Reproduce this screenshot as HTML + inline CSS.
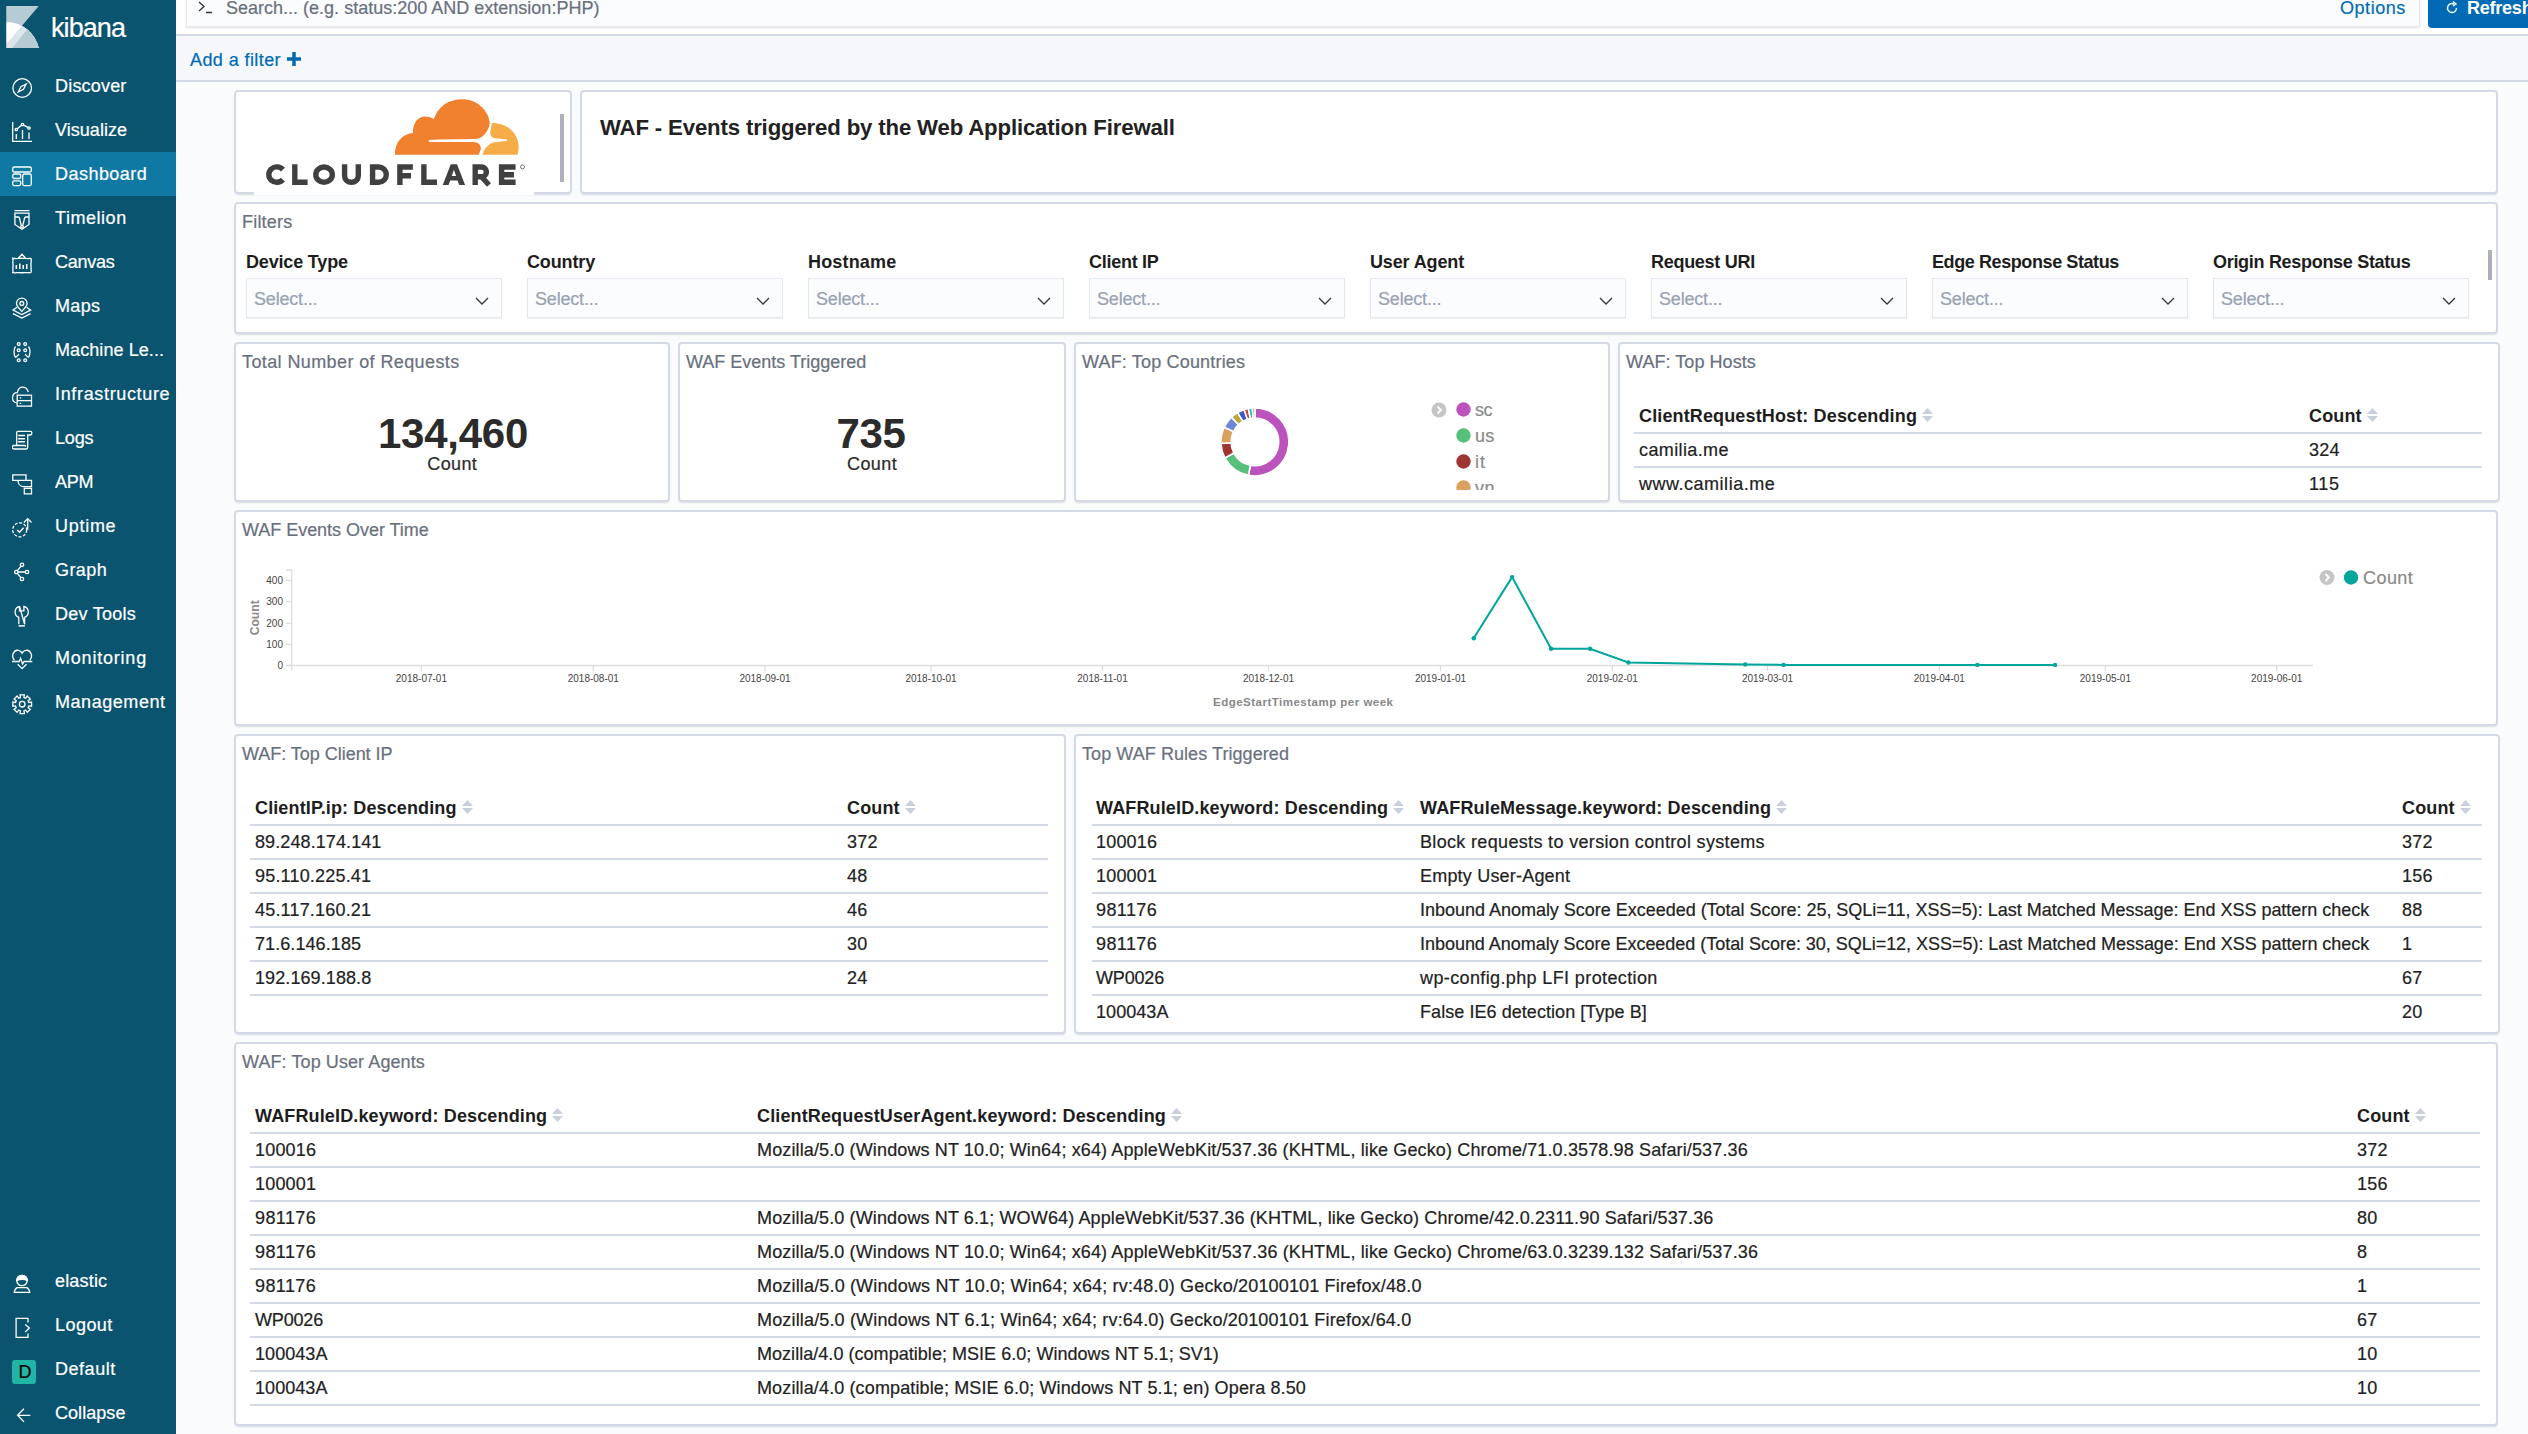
<!DOCTYPE html><html><head><meta charset="utf-8"><style>
*{box-sizing:border-box;margin:0;padding:0}
html,body{width:2528px;height:1434px;overflow:hidden}
body{position:relative;background:#fafbfd;font-family:"Liberation Sans",sans-serif;color:#2d2d2d}
.a{position:absolute;white-space:nowrap}
.nav svg{position:absolute;fill:none;stroke:#fff;stroke-width:1.3}
.p{position:absolute;background:#fff;border:2px solid #d3dae6;border-radius:4px;box-shadow:0 2px 2px -1px rgba(152,162,179,.35);overflow:hidden}
.hl{position:absolute;height:2px;background:#d3dae6}
</style></head><body>
<div class="a" style="left:0;top:0;width:176px;height:1434px;background:#0a5470"></div>
<svg class="a" style="left:6px;top:6px" width="33" height="42" viewBox="0 0 32.4 41.8"><defs><clipPath id="kc"><path d="M0 15.9A33.2 33.2 0 0 1 32.4 41.8H0Z"/></clipPath></defs><path d="M0 0H32.4L0 38.1Z" fill="#b5ccd4"/><g clip-path="url(#kc)"><rect x="0" y="0" width="33" height="42" fill="#fff"/><path d="M32.4 0H50V41.8H0V38.1Z" fill="#dce5e9"/><path d="M39.6 0H50V41.8H5.9Z" fill="#b5ccd4"/></g></svg>
<div class="a" style="left:51.00px;top:13.14px;font-size:27.00px;line-height:31px;color:#fff;-webkit-text-stroke:0.2px #fff;letter-spacing:-0.926px;">kibana</div>
<svg class="a" style="left:12px;top:76px;stroke:#fff;fill:none;stroke-width:1.3" width="22" height="26" viewBox="0 0 22 26"><g transform="translate(0 2)"><circle cx="10.2" cy="10" r="9.3"/><path d="M14.2 6L8.9 8.7L6.2 14L11.5 11.3Z"/></g></svg><div class="a" style="left:55.00px;top:76.25px;font-size:18.03px;line-height:21px;color:#fff;-webkit-text-stroke:0.2px #fff;letter-spacing:0.182px;">Discover</div>
<svg class="a" style="left:12px;top:120px;stroke:#fff;fill:none;stroke-width:1.3" width="22" height="26" viewBox="0 0 22 26"><g transform="translate(0 2)"><path d="M0.7 0V19.3H20"/><circle cx="4.3" cy="7.5" r="1.2"/><circle cx="10.5" cy="2.5" r="1.2"/><circle cx="17" cy="6" r="1.2"/><path d="M5.3 6.8L9.5 3.3M11.5 3.1L16 5.3M4.3 12V17M10.5 8V17M17 10.5V17"/></g></svg><div class="a" style="left:55.00px;top:120.25px;font-size:18.03px;line-height:21px;color:#fff;-webkit-text-stroke:0.2px #fff;letter-spacing:0.032px;">Visualize</div>
<div class="a" style="left:0;top:152px;width:176px;height:44px;background:#1079a3"></div><svg class="a" style="left:12px;top:164px;stroke:#fff;fill:none;stroke-width:1.3" width="22" height="26" viewBox="0 0 22 26"><g transform="translate(0 2.3)"><rect x="0.7" y="0.7" width="18.6" height="5" rx="1.5"/><rect x="0.7" y="7.7" width="8" height="4.5" rx="1.5"/><rect x="0.7" y="14.5" width="8" height="4.8" rx="1.5"/><rect x="10.7" y="7.7" width="8.6" height="11.6" rx="1.5"/></g></svg><div class="a" style="left:55.00px;top:164.25px;font-size:18.03px;line-height:21px;color:#fff;-webkit-text-stroke:0.2px #fff;letter-spacing:0.457px;">Dashboard</div>
<svg class="a" style="left:12px;top:208px;stroke:#fff;fill:none;stroke-width:1.3" width="22" height="26" viewBox="0 0 22 26"><path d="M2.4 2.6H17.5M2.9 5.1H17V16.5L10 21.3L2.9 16.5Z M3 9H6.3C7.5 9 7.6 10.5 8 12.5L9.2 17M10.8 17L12 12.5C12.4 10.5 12.5 9 13.7 9H17"/><circle cx="10" cy="18.6" r="1.3"/></svg><div class="a" style="left:55.00px;top:208.25px;font-size:18.03px;line-height:21px;color:#fff;-webkit-text-stroke:0.2px #fff;letter-spacing:0.542px;">Timelion</div>
<svg class="a" style="left:12px;top:252px;stroke:#fff;fill:none;stroke-width:1.3" width="22" height="26" viewBox="0 0 22 26"><path d="M0.8 6.3C1.5 7 2 6 3 6.5C5 7 7 6 10 6.3C13 6 15 7 17 6.5C18 6 18.5 7 19.3 6.3C18.8 7.5 19.5 9 19 11C18.7 13 19.5 15 19 17.5C19.5 18.5 19 20 19.3 20.5C18.5 20 17.5 21 16 20.7C14 20.3 11 21 10 20.7C8 21 5 20.3 3 20.8C2 21 1.3 20.3 0.8 20.5C1.3 19 0.6 17 1 15C1.3 13 0.5 10 1 8.5C1.2 7.5 0.6 7 0.8 6.3Z M6.2 6.3L10 2.3L13.8 6.3"/><path d="M4.3 17V13M7.8 17V11.5M11.2 17V13M14.7 17V12M14 14.5H15.5" stroke-width="1.5"/></svg><div class="a" style="left:55.00px;top:252.25px;font-size:18.03px;line-height:21px;color:#fff;-webkit-text-stroke:0.2px #fff;letter-spacing:-0.264px;">Canvas</div>
<svg class="a" style="left:12px;top:296px;stroke:#fff;fill:none;stroke-width:1.3" width="22" height="26" viewBox="0 0 22 26"><path d="M9.8 15.4C7 12.3 4.5 10 4.5 7.4A5.3 5.3 0 0 1 15.1 7.4C15.1 10 12.6 12.3 9.8 15.4Z"/><circle cx="9.8" cy="7.4" r="1.9"/><path d="M5 11.2L1 14.1L9.8 18.6L18.6 14.1L14.6 11.2 M1 17.6L9.8 22L18.6 17.6"/></svg><div class="a" style="left:55.00px;top:296.25px;font-size:18.03px;line-height:21px;color:#fff;-webkit-text-stroke:0.2px #fff;letter-spacing:0.356px;">Maps</div>
<svg class="a" style="left:12px;top:340px;stroke:#fff;fill:none;stroke-width:1.3" width="22" height="26" viewBox="0 0 22 26"><circle cx="6.7" cy="4.1" r="1.4"/><circle cx="13.2" cy="4.1" r="1.4"/><circle cx="6.7" cy="10.2" r="1.4"/><circle cx="13.2" cy="10.2" r="1.4"/><circle cx="6.7" cy="20.2" r="1.4"/><circle cx="13.2" cy="20.2" r="1.4"/><path d="M3.5 6.5C1.5 9 1.5 14 3.5 17.5M16.5 6.5C18.5 9 18.5 14 16.5 17.5M7 14.2C5.5 15.5 4.5 16.5 3.5 17.5M13 14.2C14.5 15.5 15.5 16.5 16.5 17.5"/></svg><div class="a" style="left:55.00px;top:340.25px;font-size:18.03px;line-height:21px;color:#fff;-webkit-text-stroke:0.2px #fff;letter-spacing:0.069px;">Machine Le...</div>
<svg class="a" style="left:12px;top:384px;stroke:#fff;fill:none;stroke-width:1.3" width="22" height="26" viewBox="0 0 22 26"><path d="M4.6 18.8C1.5 18 0 15.5 0.7 12.5C1.2 10 3.3 8.5 5.3 8.6C6 5.5 8 3.2 10.5 3.2C13.5 3.2 15.5 5.5 16.3 8"/><rect x="5.2" y="11.2" width="14.3" height="10.9"/><path d="M5.2 16.6H19.5M7.8 13.9H9.2M7.8 19.3H9.2"/></svg><div class="a" style="left:55.00px;top:384.25px;font-size:18.03px;line-height:21px;color:#fff;-webkit-text-stroke:0.2px #fff;letter-spacing:0.652px;">Infrastructure</div>
<svg class="a" style="left:12px;top:428px;stroke:#fff;fill:none;stroke-width:1.3" width="22" height="26" viewBox="0 0 22 26"><path d="M4.7 17.3V4.5C4.7 3.8 5.2 3.3 5.9 3.3H18.3C19.3 3.3 19.9 4.2 19.9 5.1C19.9 6 19.3 7 18.3 7H15.7V19.5C15.7 20.3 15 21 14.2 21H1.9C0.9 21 0.3 20.1 0.3 19.2C0.3 18.2 1 17.5 1.9 17.5H12.5C13.3 17.5 13.7 18 13.7 18.8"/><path d="M6.2 7.5H13M6.2 10.8H13M6.2 13.8H13" stroke-width="1.5"/></svg><div class="a" style="left:55.00px;top:428.25px;font-size:18.03px;line-height:21px;color:#fff;-webkit-text-stroke:0.2px #fff;letter-spacing:-0.199px;">Logs</div>
<svg class="a" style="left:12px;top:472px;stroke:#fff;fill:none;stroke-width:1.3" width="22" height="26" viewBox="0 0 22 26"><path d="M0.8 2.9H14V8.4H0.8Z M6 8.4H19.5V14.6H12C8.5 14.6 6 12 6 8.4Z M12.3 16.3H19.5V21.8H12.3Z"/></svg><div class="a" style="left:55.00px;top:472.25px;font-size:18.03px;line-height:21px;color:#fff;-webkit-text-stroke:0.2px #fff;letter-spacing:-0.301px;">APM</div>
<svg class="a" style="left:12px;top:516px;stroke:#fff;fill:none;stroke-width:1.3" width="22" height="26" viewBox="0 0 22 26"><circle cx="7.7" cy="13.8" r="7" stroke-dasharray="3 1.6"/><path d="M15.7 13.8V3M11.9 6.5L15.7 2.6L19.5 6.5M5.2 14L7.4 16.2L11.6 11.8"/></svg><div class="a" style="left:55.00px;top:516.25px;font-size:18.03px;line-height:21px;color:#fff;-webkit-text-stroke:0.2px #fff;letter-spacing:0.713px;">Uptime</div>
<svg class="a" style="left:12px;top:560px;stroke:#fff;fill:none;stroke-width:1.3" width="22" height="26" viewBox="0 0 22 26"><circle cx="10" cy="4.8" r="1.7"/><circle cx="4.3" cy="12" r="1.7"/><circle cx="15" cy="12" r="1.7"/><circle cx="10" cy="19" r="1.7"/><path d="M6 12H13.3M5.3 10.6L8.8 6.3M5.3 13.4L8.8 17.5"/></svg><div class="a" style="left:55.00px;top:560.25px;font-size:18.03px;line-height:21px;color:#fff;-webkit-text-stroke:0.2px #fff;letter-spacing:0.402px;">Graph</div>
<svg class="a" style="left:12px;top:604px;stroke:#fff;fill:none;stroke-width:1.3" width="22" height="26" viewBox="0 0 22 26"><path d="M7.5 2.3C4.8 3 3.1 5.2 3.1 8C3.1 10.5 4.6 12.5 6.8 13.3V20.2M12.6 20.2V13.3C14.8 12.5 16.3 10.5 16.3 8C16.3 5.2 14.6 3 11.9 2.3V6.8H7.5V2.3Z"/><path d="M6.6 21.9H12.9" stroke-width="1.5"/></svg><div class="a" style="left:55.00px;top:604.25px;font-size:18.03px;line-height:21px;color:#fff;-webkit-text-stroke:0.2px #fff;letter-spacing:0.251px;">Dev Tools</div>
<svg class="a" style="left:12px;top:648px;stroke:#fff;fill:none;stroke-width:1.3" width="22" height="26" viewBox="0 0 22 26"><path d="M2.4 12C0.6 10 0.3 7.3 1.3 5.2C2.5 2.7 5 1.9 7 2.5C8.5 3 9.5 4 10.1 5.1C10.7 4 11.7 3 13.2 2.5C15.2 1.9 17.7 2.7 18.9 5.2C19.9 7.3 19.6 10 17.8 12M0 13.5H7.2L8.6 10.2L10.6 16L12.1 13.5H20.3M5.7 16.2L10.1 20.6L14.5 16.2"/></svg><div class="a" style="left:55.00px;top:648.25px;font-size:18.03px;line-height:21px;color:#fff;-webkit-text-stroke:0.2px #fff;letter-spacing:0.784px;">Monitoring</div>
<svg class="a" style="left:12px;top:692px;stroke:#fff;fill:none;stroke-width:1.3" width="22" height="26" viewBox="0 0 22 26"><path d="M8.04 2.85 L12.36 2.85 L11.93 5.52 L13.70 6.25 L15.29 4.06 L18.34 7.11 L16.15 8.70 L16.88 10.47 L19.55 10.04 L19.55 14.36 L16.88 13.93 L16.15 15.70 L18.34 17.29 L15.29 20.34 L13.70 18.15 L11.93 18.88 L12.36 21.55 L8.04 21.55 L8.47 18.88 L6.70 18.15 L5.11 20.34 L2.06 17.29 L4.25 15.70 L3.52 13.93 L0.85 14.36 L0.85 10.04 L3.52 10.47 L4.25 8.70 L2.06 7.11 L5.11 4.06 L6.70 6.25 L8.47 5.52Z"/><circle cx="10.2" cy="12.2" r="2.8"/></svg><div class="a" style="left:55.00px;top:692.25px;font-size:18.03px;line-height:21px;color:#fff;-webkit-text-stroke:0.2px #fff;letter-spacing:0.539px;">Management</div>
<svg class="a" style="left:12px;top:1271px;stroke:#fff;fill:none;stroke-width:1.3" width="22" height="26" viewBox="0 0 22 26"><circle cx="10" cy="9.5" r="5.2"/><path d="M4.8 9.5A5.2 5.2 0 0 1 15.2 9.5C13 8 8 8 4.8 9.5Z" fill="#fff"/><path d="M2.3 21.3C2.6 18.7 3.5 17.3 5.2 16.6H14.8C16.5 17.3 17.4 18.7 17.7 21.3Z"/></svg><div class="a" style="left:55.00px;top:1271.25px;font-size:18.03px;line-height:21px;color:#fff;-webkit-text-stroke:0.2px #fff;letter-spacing:0.171px;">elastic</div>
<svg class="a" style="left:12px;top:1315px;stroke:#fff;fill:none;stroke-width:1.3" width="22" height="26" viewBox="0 0 22 26"><path d="M16 7.5V3.4H4.1V22.4H16V18.5M13.2 9.4L17.4 13L13.2 17"/></svg><div class="a" style="left:55.00px;top:1315.25px;font-size:18.03px;line-height:21px;color:#fff;-webkit-text-stroke:0.2px #fff;letter-spacing:0.448px;">Logout</div>
<div class="a" style="left:12px;top:1360px;width:24px;height:24px;border-radius:3px;background:#22b5a5"></div>
<div class="a" style="left:18.50px;top:1362.25px;font-size:18.03px;line-height:21px;color:#000;-webkit-text-stroke:0.2px #000;">D</div>
<div class="a" style="left:55.00px;top:1359.25px;font-size:18.03px;line-height:21px;color:#fff;-webkit-text-stroke:0.2px #fff;letter-spacing:0.524px;">Default</div>
<svg class="a" style="left:12px;top:1403px;stroke:#fff;fill:none;stroke-width:1.3" width="22" height="26" viewBox="0 0 22 26"><path d="M18.3 12.3H5.8M12 5.7L5.6 12.3L12 18.9"/></svg><div class="a" style="left:55.00px;top:1403.25px;font-size:18.03px;line-height:21px;color:#fff;-webkit-text-stroke:0.2px #fff;letter-spacing:0.042px;">Collapse</div>
<div class="a" style="left:176px;top:0;width:2352px;height:34px;background:#fff"></div>
<div class="a" style="left:176px;top:34px;width:2352px;height:2px;background:#d3dae6"></div>
<div class="a" style="left:176px;top:36px;width:2352px;height:44px;background:#f5f7fa"></div>
<div class="a" style="left:176px;top:80px;width:2352px;height:2px;background:#d3dae6"></div>
<div class="a" style="left:186px;top:-4px;width:2234px;height:31px;background:#fbfcfd;border:1px solid #e6e9ee;border-top:none;box-shadow:0 1px 2px rgba(0,0,0,.12)"></div>
<svg class="a" style="left:198px;top:1px" width="16" height="13" viewBox="0 0 16 13"><path d="M1 1L6 5.5L1 10M8 11.5H14" fill="none" stroke="#333" stroke-width="1.3"/></svg>
<div class="a" style="left:226.00px;top:-2.05px;font-size:18.03px;line-height:21px;color:#69707d;-webkit-text-stroke:0.2px #69707d;letter-spacing:-0.002px;">Search... (e.g. status:200 AND extension:PHP)</div>
<div class="a" style="left:2340.00px;top:-1.75px;font-size:18.03px;line-height:21px;color:#006bb4;-webkit-text-stroke:0.2px #006bb4;letter-spacing:0.542px;">Options</div>
<div class="a" style="left:2428px;top:-6px;width:120px;height:34px;background:#006bb4;border-radius:4px"></div>
<svg class="a" style="left:2445px;top:1px" width="14" height="14" viewBox="0 0 14 14"><path d="M11.5 7A4.5 4.5 0 1 1 9 3" fill="none" stroke="#fff" stroke-width="1.4"/><path d="M8 0.5L11 3L8 5" fill="none" stroke="#fff" stroke-width="1.4"/></svg>
<div class="a" style="left:2467.00px;top:-1.75px;font-size:18.03px;line-height:21px;color:#fff;font-weight:bold;letter-spacing:-0.240px;">Refresh</div>
<div class="a" style="left:190.00px;top:50.25px;font-size:18.03px;line-height:21px;color:#006bb4;-webkit-text-stroke:0.2px #006bb4;letter-spacing:0.408px;">Add a filter</div>
<svg class="a" style="left:287px;top:52px" width="14" height="14" viewBox="0 0 14 14"><path d="M7 0V14M0 7H14" stroke="#006bb4" stroke-width="3.5"/></svg>
<div class="p" style="left:234px;top:90px;width:338px;height:104px"><div class="a" style="left:18px;top:-2px;width:280px;height:104px;background:#fff"></div><svg class="a" style="left:-2px;top:-2px;" width="338" height="104" viewBox="234 90 338 104"><path d="M395.1 154.8C394.5 142 403 133.5 413 132.9C412.5 123 418 116.4 425.2 116.4C429 116.4 431.5 117.5 433.8 119C438 107 448 99.3 462.1 99.3C477 99.3 488 110 489.8 122.2C489 131 483 138.5 475.4 139L440 139.6L428.4 140.1C428.5 141.4 429.2 141.8 430 142L473.3 142C478 142 481.5 145 480.8 149.5L478.6 154.8Z" fill="#f2812f"/><path d="M482.6 154.8C484.5 147 490 142.5 497 142L506.9 140.8C507.2 139.8 507 139.4 506 139.2L496.2 138.6C491.5 138 490 135 490.2 132L492 123C507 123 519 133 518.7 148L517.6 154.8Z" fill="#f6ad48"/><g fill="none" stroke="#404041" stroke-width="5.4"><path d="M282.9 169.6A8 7.7 0 1 0 282.9 179.6"/><path d="M294.8 164.3V182.3H307.6"/><ellipse cx="324.05" cy="174.65" rx="8.25" ry="7.65"/><path d="M344.6 164.3V176A6.85 6.3 0 0 0 358.3 176V164.3"/><path d="M372.6 164.3V185M369.9 167H378.5A7.8 7.65 0 0 1 378.5 182.3H369.9"/><path d="M399.9 164.3V185M397.2 167H412.9M397.2 175.7H411"/><path d="M423.9 164.3V182.3H437"/><path d="M475.2 164.3V185M472.5 167H481.5A4.9 4.9 0 0 1 481.5 176.8H475M481.5 176.8L489 185"/><path d="M501.6 164.3V185M498.9 167H515.6M498.9 174.7H514M498.9 182.3H515.6"/></g><path fill="#404041" fill-rule="evenodd" d="M442.7 185L450.8 164.3H457L465.1 185H459.2L457.6 180.6H450.2L448.6 185Z M451.7 176H456.1L453.9 169.8Z"/><circle cx="522.5" cy="166.9" r="2" fill="none" stroke="#404041" stroke-width=".7"/></svg><div class="a" style="left:324px;top:22px;width:4px;height:68px;background:#abb0ba"></div></div>
<div class="a" style="left:254px;top:192px;width:280px;height:3px;background:#fff"></div>
<div class="p" style="left:580px;top:90px;width:1918px;height:104px"><div class="a" style="left:18.00px;top:22.61px;font-size:22.20px;line-height:26px;color:#222;font-weight:bold;letter-spacing:-0.156px;">WAF - Events triggered by the Web Application Firewall</div></div>
<div class="p" style="left:234px;top:202px;width:2264px;height:132px"><div class="a" style="left:6.00px;top:8.25px;font-size:18.03px;line-height:21px;color:#69707d;-webkit-text-stroke:0.2px #69707d;letter-spacing:0.185px;">Filters</div><div class="a" style="left:10.00px;top:47.75px;font-size:18.03px;line-height:21px;color:#1d1d1d;font-weight:bold;letter-spacing:-0.182px;">Device Type</div><div class="a" style="left:10px;top:74px;width:256px;height:40px;background:#fbfcfd;border:1px solid #e3e7ee;box-shadow:0 1px 1px rgba(0,0,0,.06)"></div><div class="a" style="left:18.00px;top:84.75px;font-size:18.03px;line-height:21px;color:#98a2b3;-webkit-text-stroke:0.2px #98a2b3;letter-spacing:-0.192px;">Select...</div><svg class="a" style="left:239px;top:93px;" width="14" height="9" viewBox="0 0 14 9"><path d="M1 1L7 7L13 1" fill="none" stroke="#343741" stroke-width="1.3"/></svg><div class="a" style="left:291.00px;top:47.75px;font-size:18.03px;line-height:21px;color:#1d1d1d;font-weight:bold;letter-spacing:-0.136px;">Country</div><div class="a" style="left:291px;top:74px;width:256px;height:40px;background:#fbfcfd;border:1px solid #e3e7ee;box-shadow:0 1px 1px rgba(0,0,0,.06)"></div><div class="a" style="left:299.00px;top:84.75px;font-size:18.03px;line-height:21px;color:#98a2b3;-webkit-text-stroke:0.2px #98a2b3;letter-spacing:-0.192px;">Select...</div><svg class="a" style="left:520px;top:93px;" width="14" height="9" viewBox="0 0 14 9"><path d="M1 1L7 7L13 1" fill="none" stroke="#343741" stroke-width="1.3"/></svg><div class="a" style="left:572.00px;top:47.75px;font-size:18.03px;line-height:21px;color:#1d1d1d;font-weight:bold;letter-spacing:0.156px;">Hostname</div><div class="a" style="left:572px;top:74px;width:256px;height:40px;background:#fbfcfd;border:1px solid #e3e7ee;box-shadow:0 1px 1px rgba(0,0,0,.06)"></div><div class="a" style="left:580.00px;top:84.75px;font-size:18.03px;line-height:21px;color:#98a2b3;-webkit-text-stroke:0.2px #98a2b3;letter-spacing:-0.192px;">Select...</div><svg class="a" style="left:801px;top:93px;" width="14" height="9" viewBox="0 0 14 9"><path d="M1 1L7 7L13 1" fill="none" stroke="#343741" stroke-width="1.3"/></svg><div class="a" style="left:853.00px;top:47.75px;font-size:18.03px;line-height:21px;color:#1d1d1d;font-weight:bold;letter-spacing:-0.280px;">Client IP</div><div class="a" style="left:853px;top:74px;width:256px;height:40px;background:#fbfcfd;border:1px solid #e3e7ee;box-shadow:0 1px 1px rgba(0,0,0,.06)"></div><div class="a" style="left:861.00px;top:84.75px;font-size:18.03px;line-height:21px;color:#98a2b3;-webkit-text-stroke:0.2px #98a2b3;letter-spacing:-0.192px;">Select...</div><svg class="a" style="left:1082px;top:93px;" width="14" height="9" viewBox="0 0 14 9"><path d="M1 1L7 7L13 1" fill="none" stroke="#343741" stroke-width="1.3"/></svg><div class="a" style="left:1134.00px;top:47.75px;font-size:18.03px;line-height:21px;color:#1d1d1d;font-weight:bold;letter-spacing:-0.144px;">User Agent</div><div class="a" style="left:1134px;top:74px;width:256px;height:40px;background:#fbfcfd;border:1px solid #e3e7ee;box-shadow:0 1px 1px rgba(0,0,0,.06)"></div><div class="a" style="left:1142.00px;top:84.75px;font-size:18.03px;line-height:21px;color:#98a2b3;-webkit-text-stroke:0.2px #98a2b3;letter-spacing:-0.192px;">Select...</div><svg class="a" style="left:1363px;top:93px;" width="14" height="9" viewBox="0 0 14 9"><path d="M1 1L7 7L13 1" fill="none" stroke="#343741" stroke-width="1.3"/></svg><div class="a" style="left:1415.00px;top:47.75px;font-size:18.03px;line-height:21px;color:#1d1d1d;font-weight:bold;letter-spacing:-0.296px;">Request URI</div><div class="a" style="left:1415px;top:74px;width:256px;height:40px;background:#fbfcfd;border:1px solid #e3e7ee;box-shadow:0 1px 1px rgba(0,0,0,.06)"></div><div class="a" style="left:1423.00px;top:84.75px;font-size:18.03px;line-height:21px;color:#98a2b3;-webkit-text-stroke:0.2px #98a2b3;letter-spacing:-0.192px;">Select...</div><svg class="a" style="left:1644px;top:93px;" width="14" height="9" viewBox="0 0 14 9"><path d="M1 1L7 7L13 1" fill="none" stroke="#343741" stroke-width="1.3"/></svg><div class="a" style="left:1696.00px;top:47.75px;font-size:18.03px;line-height:21px;color:#1d1d1d;font-weight:bold;letter-spacing:-0.417px;">Edge Response Status</div><div class="a" style="left:1696px;top:74px;width:256px;height:40px;background:#fbfcfd;border:1px solid #e3e7ee;box-shadow:0 1px 1px rgba(0,0,0,.06)"></div><div class="a" style="left:1704.00px;top:84.75px;font-size:18.03px;line-height:21px;color:#98a2b3;-webkit-text-stroke:0.2px #98a2b3;letter-spacing:-0.192px;">Select...</div><svg class="a" style="left:1925px;top:93px;" width="14" height="9" viewBox="0 0 14 9"><path d="M1 1L7 7L13 1" fill="none" stroke="#343741" stroke-width="1.3"/></svg><div class="a" style="left:1977.00px;top:47.75px;font-size:18.03px;line-height:21px;color:#1d1d1d;font-weight:bold;letter-spacing:-0.309px;">Origin Response Status</div><div class="a" style="left:1977px;top:74px;width:256px;height:40px;background:#fbfcfd;border:1px solid #e3e7ee;box-shadow:0 1px 1px rgba(0,0,0,.06)"></div><div class="a" style="left:1985.00px;top:84.75px;font-size:18.03px;line-height:21px;color:#98a2b3;-webkit-text-stroke:0.2px #98a2b3;letter-spacing:-0.192px;">Select...</div><svg class="a" style="left:2206px;top:93px;" width="14" height="9" viewBox="0 0 14 9"><path d="M1 1L7 7L13 1" fill="none" stroke="#343741" stroke-width="1.3"/></svg><div class="a" style="left:2252px;top:46px;width:4px;height:30px;background:#abb0ba"></div></div>
<div class="p" style="left:234px;top:342px;width:436px;height:160px"><div class="a" style="left:6.00px;top:8.25px;font-size:18.03px;line-height:21px;color:#69707d;-webkit-text-stroke:0.2px #69707d;letter-spacing:0.388px;">Total Number of Requests</div><div class="a" style="left:142.00px;top:66.45px;font-size:42.00px;line-height:48px;color:#2b2b2b;font-weight:bold;letter-spacing:-0.258px;">134,460</div><div class="a" style="left:191.25px;top:110.25px;font-size:18.03px;line-height:21px;color:#2b2b2b;-webkit-text-stroke:0.2px #2b2b2b;letter-spacing:0.381px;">Count</div></div>
<div class="p" style="left:678px;top:342px;width:388px;height:160px"><div class="a" style="left:6.00px;top:8.25px;font-size:18.03px;line-height:21px;color:#69707d;-webkit-text-stroke:0.2px #69707d;letter-spacing:-0.009px;">WAF Events Triggered</div><div class="a" style="left:156.60px;top:66.45px;font-size:42.00px;line-height:48px;color:#2b2b2b;font-weight:bold;letter-spacing:-0.356px;">735</div><div class="a" style="left:167.05px;top:110.25px;font-size:18.03px;line-height:21px;color:#2b2b2b;-webkit-text-stroke:0.2px #2b2b2b;letter-spacing:0.381px;">Count</div></div>
<div class="p" style="left:1074px;top:342px;width:536px;height:160px"><div class="a" style="left:6.00px;top:8.25px;font-size:18.03px;line-height:21px;color:#69707d;-webkit-text-stroke:0.2px #69707d;letter-spacing:0.165px;">WAF: Top Countries</div><svg class="a" style="left:138px;top:58px;" width="82" height="82" viewBox="0 0 82 82"><path d="M40.90 5.90A34 34 0 1 1 34.41 73.28L36.36 63.26A23.8 23.8 0 1 0 40.90 16.10Z" fill="#bc52bc" stroke="#fff" stroke-width="1.6"/><path d="M34.41 73.28A34 34 0 0 1 10.88 55.86L19.89 51.07A23.8 23.8 0 0 0 36.36 63.26Z" fill="#57c17b" stroke="#fff" stroke-width="1.6"/><path d="M10.88 55.86A34 34 0 0 1 6.93 41.32L17.12 40.90A23.8 23.8 0 0 0 19.89 51.07Z" fill="#9e3533" stroke="#fff" stroke-width="1.6"/><path d="M6.93 41.32A34 34 0 0 1 10.26 25.16L19.45 29.58A23.8 23.8 0 0 0 17.12 40.90Z" fill="#daa05d" stroke="#fff" stroke-width="1.6"/><path d="M10.26 25.16A34 34 0 0 1 17.50 15.24L24.52 22.64A23.8 23.8 0 0 0 19.45 29.58Z" fill="#6f87d8" stroke="#fff" stroke-width="1.6"/><path d="M17.50 15.24A34 34 0 0 1 23.75 10.54L28.89 19.35A23.8 23.8 0 0 0 24.52 22.64Z" fill="#b9a842" stroke="#fff" stroke-width="1.6"/><path d="M23.75 10.54A34 34 0 0 1 30.17 7.64L33.39 17.32A23.8 23.8 0 0 0 28.89 19.35Z" fill="#3f56c4" stroke="#fff" stroke-width="1.6"/><path d="M30.17 7.64A34 34 0 0 1 34.41 6.52L36.36 16.54A23.8 23.8 0 0 0 33.39 17.32Z" fill="#c9473d" stroke="#fff" stroke-width="1.6"/><path d="M34.41 6.52A34 34 0 0 1 38.35 6.00L39.12 16.17A23.8 23.8 0 0 0 36.36 16.54Z" fill="#36b5c8" stroke="#fff" stroke-width="1.6"/><path d="M38.35 6.00A34 34 0 0 1 40.90 5.90L40.90 16.10A23.8 23.8 0 0 0 39.12 16.17Z" fill="#65c24f" stroke="#fff" stroke-width="1.6"/></svg><svg class="a" style="left:355px;top:58px;" width="16" height="16" viewBox="0 0 16 16"><circle cx="8" cy="8" r="7.5" fill="#c5c5c5"/><path d="M6.5 4.5L10 8L6.5 11.5" fill="none" stroke="#fff" stroke-width="2"/></svg><svg class="a" style="left:379.5px;top:58.0px;" width="15" height="15" viewBox="0 0 15 15"><circle cx="7.5" cy="7.5" r="7.2" fill="#bc52bc"/></svg><div class="a" style="left:399.00px;top:56.25px;font-size:18.03px;line-height:21px;color:#8a8a8a;-webkit-text-stroke:0.2px #8a8a8a;letter-spacing:-0.506px;">sc</div><svg class="a" style="left:379.5px;top:84.0px;" width="15" height="15" viewBox="0 0 15 15"><circle cx="7.5" cy="7.5" r="7.2" fill="#57c17b"/></svg><div class="a" style="left:399.00px;top:82.25px;font-size:18.03px;line-height:21px;color:#8a8a8a;-webkit-text-stroke:0.2px #8a8a8a;letter-spacing:0.218px;">us</div><svg class="a" style="left:379.5px;top:110.0px;" width="15" height="15" viewBox="0 0 15 15"><circle cx="7.5" cy="7.5" r="7.2" fill="#9e3533"/></svg><div class="a" style="left:399.00px;top:108.25px;font-size:18.03px;line-height:21px;color:#8a8a8a;-webkit-text-stroke:0.2px #8a8a8a;letter-spacing:0.902px;">it</div><svg class="a" style="left:379.5px;top:136.0px;" width="15" height="15" viewBox="0 0 15 15"><circle cx="7.5" cy="7.5" r="7.2" fill="#daa05d"/></svg><div class="a" style="left:399.00px;top:134.25px;font-size:18.03px;line-height:21px;color:#8a8a8a;-webkit-text-stroke:0.2px #8a8a8a;letter-spacing:0.431px;">vn</div><div class="a" style="left:364px;top:146px;width:100px;height:20px;background:#fff"></div></div>
<div class="p" style="left:1618px;top:342px;width:882px;height:160px"><div class="a" style="left:6.00px;top:8.25px;font-size:18.03px;line-height:21px;color:#69707d;-webkit-text-stroke:0.2px #69707d;letter-spacing:0.052px;">WAF: Top Hosts</div><div class="a" style="left:19.00px;top:62.25px;font-size:18.03px;line-height:21px;color:#1d1d1d;font-weight:bold;letter-spacing:0.129px;">ClientRequestHost: Descending</div><svg class="a" style="left:302px;top:64px;" width="11" height="14" viewBox="0 0 11 14"><path d="M5.5 0L11 6H0Z M0 8H11L5.5 14Z" fill="#c9d0db"/></svg><div class="a" style="left:689.00px;top:62.25px;font-size:18.03px;line-height:21px;color:#1d1d1d;font-weight:bold;letter-spacing:0.141px;">Count</div><svg class="a" style="left:747px;top:64px;" width="11" height="14" viewBox="0 0 11 14"><path d="M5.5 0L11 6H0Z M0 8H11L5.5 14Z" fill="#c9d0db"/></svg><div class="a" style="left:14px;top:88px;width:848px;height:2px;background:#d3dae6"></div><div class="a" style="left:19.00px;top:96.25px;font-size:18.03px;line-height:21px;color:#222;-webkit-text-stroke:0.2px #222;letter-spacing:0.373px;">camilia.me</div><div class="a" style="left:689.00px;top:96.25px;font-size:18.03px;line-height:21px;color:#222;-webkit-text-stroke:0.2px #222;letter-spacing:0.183px;">324</div><div class="a" style="left:14px;top:122px;width:848px;height:2px;background:#d3dae6"></div><div class="a" style="left:19.00px;top:130.25px;font-size:18.03px;line-height:21px;color:#222;-webkit-text-stroke:0.2px #222;letter-spacing:0.505px;">www.camilia.me</div><div class="a" style="left:689.00px;top:130.25px;font-size:18.03px;line-height:21px;color:#222;-webkit-text-stroke:0.2px #222;letter-spacing:0.629px;">115</div><div class="a" style="left:14px;top:156px;width:848px;height:2px;background:#d3dae6"></div></div>
<div class="p" style="left:234px;top:510px;width:2264px;height:216px"><div class="a" style="left:6.00px;top:8.25px;font-size:18.03px;line-height:21px;color:#69707d;-webkit-text-stroke:0.2px #69707d;letter-spacing:-0.043px;">WAF Events Over Time</div><svg class="a" style="left:0px;top:0px;" width="2260" height="212" viewBox="236 512 2260 212"><path d="M286 570H292M291.8 569.5V671M286 665.5H2313" stroke="#ddd" stroke-width="1.3" fill="none"/><path d="M286 580.3H291.5" stroke="#ddd" stroke-width="1.3"/><text x="283" y="583.9" text-anchor="end" font-size="10" fill="#444">400</text><path d="M286 601.6H291.5" stroke="#ddd" stroke-width="1.3"/><text x="283" y="605.2" text-anchor="end" font-size="10" fill="#444">300</text><path d="M286 623.3H291.5" stroke="#ddd" stroke-width="1.3"/><text x="283" y="626.9" text-anchor="end" font-size="10" fill="#444">200</text><path d="M286 644.3H291.5" stroke="#ddd" stroke-width="1.3"/><text x="283" y="647.9" text-anchor="end" font-size="10" fill="#444">100</text><path d="M286 665.3H291.5" stroke="#ddd" stroke-width="1.3"/><text x="283" y="668.9" text-anchor="end" font-size="10" fill="#444">0</text><path d="M421.4 665V671" stroke="#ddd" stroke-width="1.3"/><text x="421.4" y="682" text-anchor="middle" font-size="10" fill="#444">2018-07-01</text><path d="M593.3 665V671" stroke="#ddd" stroke-width="1.3"/><text x="593.3" y="682" text-anchor="middle" font-size="10" fill="#444">2018-08-01</text><path d="M765 665V671" stroke="#ddd" stroke-width="1.3"/><text x="765" y="682" text-anchor="middle" font-size="10" fill="#444">2018-09-01</text><path d="M931 665V671" stroke="#ddd" stroke-width="1.3"/><text x="931" y="682" text-anchor="middle" font-size="10" fill="#444">2018-10-01</text><path d="M1102.5 665V671" stroke="#ddd" stroke-width="1.3"/><text x="1102.5" y="682" text-anchor="middle" font-size="10" fill="#444">2018-11-01</text><path d="M1268.5 665V671" stroke="#ddd" stroke-width="1.3"/><text x="1268.5" y="682" text-anchor="middle" font-size="10" fill="#444">2018-12-01</text><path d="M1440.5 665V671" stroke="#ddd" stroke-width="1.3"/><text x="1440.5" y="682" text-anchor="middle" font-size="10" fill="#444">2019-01-01</text><path d="M1612.3 665V671" stroke="#ddd" stroke-width="1.3"/><text x="1612.3" y="682" text-anchor="middle" font-size="10" fill="#444">2019-02-01</text><path d="M1767.5 665V671" stroke="#ddd" stroke-width="1.3"/><text x="1767.5" y="682" text-anchor="middle" font-size="10" fill="#444">2019-03-01</text><path d="M1939.3 665V671" stroke="#ddd" stroke-width="1.3"/><text x="1939.3" y="682" text-anchor="middle" font-size="10" fill="#444">2019-04-01</text><path d="M2105.4 665V671" stroke="#ddd" stroke-width="1.3"/><text x="2105.4" y="682" text-anchor="middle" font-size="10" fill="#444">2019-05-01</text><path d="M2276.7 665V671" stroke="#ddd" stroke-width="1.3"/><text x="2276.7" y="682" text-anchor="middle" font-size="10" fill="#444">2019-06-01</text><text x="0" y="0" transform="translate(258.8 617.8) rotate(-90)" text-anchor="middle" font-size="12" font-weight="bold" fill="#8a8a8a" textLength="35" lengthAdjust="spacingAndGlyphs">Count</text><text x="1213" y="706" font-size="11.5" font-weight="bold" fill="#888" textLength="180" lengthAdjust="spacing">EdgeStartTimestamp per week</text><polyline points="1473.7,638.3 1512.1,577.1 1551.1,648.7 1590,648.7 1628.4,662.5 1745.2,664.4 1783.6,664.9 1977.3,664.9 2055.1,664.9" fill="none" stroke="#00a69b" stroke-width="2"/><circle cx="1473.7" cy="638.3" r="2.2" fill="#00a69b"/><circle cx="1512.1" cy="577.1" r="2.2" fill="#00a69b"/><circle cx="1551.1" cy="648.7" r="2.2" fill="#00a69b"/><circle cx="1590" cy="648.7" r="2.2" fill="#00a69b"/><circle cx="1628.4" cy="662.5" r="2.2" fill="#00a69b"/><circle cx="1745.2" cy="664.4" r="2.2" fill="#00a69b"/><circle cx="1783.6" cy="664.9" r="2.2" fill="#00a69b"/><circle cx="1977.3" cy="664.9" r="2.2" fill="#00a69b"/><circle cx="2055.1" cy="664.9" r="2.2" fill="#00a69b"/><circle cx="2327" cy="577.5" r="7.5" fill="#c5c5c5"/><path d="M2325.5 574L2329 577.5L2325.5 581" fill="none" stroke="#fff" stroke-width="2"/><circle cx="2351" cy="577.5" r="7.2" fill="#00a69b"/></svg><div class="a" style="left:2127.00px;top:55.95px;font-size:18.03px;line-height:21px;color:#8a8a8a;-webkit-text-stroke:0.2px #8a8a8a;letter-spacing:0.432px;">Count</div></div>
<div class="p" style="left:234px;top:734px;width:832px;height:300px"><div class="a" style="left:6.00px;top:8.25px;font-size:18.03px;line-height:21px;color:#69707d;-webkit-text-stroke:0.2px #69707d;letter-spacing:-0.038px;">WAF: Top Client IP</div><div class="a" style="left:19.00px;top:62.25px;font-size:18.03px;line-height:21px;color:#1d1d1d;font-weight:bold;letter-spacing:0.118px;">ClientIP.ip: Descending</div><svg class="a" style="left:226px;top:64px;" width="11" height="14" viewBox="0 0 11 14"><path d="M5.5 0L11 6H0Z M0 8H11L5.5 14Z" fill="#c9d0db"/></svg><div class="a" style="left:611.00px;top:62.25px;font-size:18.03px;line-height:21px;color:#1d1d1d;font-weight:bold;letter-spacing:0.141px;">Count</div><svg class="a" style="left:669px;top:64px;" width="11" height="14" viewBox="0 0 11 14"><path d="M5.5 0L11 6H0Z M0 8H11L5.5 14Z" fill="#c9d0db"/></svg><div class="a" style="left:14px;top:88px;width:798px;height:2px;background:#d3dae6"></div><div class="a" style="left:19.00px;top:96.25px;font-size:18.03px;line-height:21px;color:#222;-webkit-text-stroke:0.2px #222;letter-spacing:0.088px;">89.248.174.141</div><div class="a" style="left:611.00px;top:96.25px;font-size:18.03px;line-height:21px;color:#222;-webkit-text-stroke:0.2px #222;letter-spacing:0.183px;">372</div><div class="a" style="left:14px;top:122px;width:798px;height:2px;background:#d3dae6"></div><div class="a" style="left:19.00px;top:130.25px;font-size:18.03px;line-height:21px;color:#222;-webkit-text-stroke:0.2px #222;letter-spacing:0.184px;">95.110.225.41</div><div class="a" style="left:611.00px;top:130.25px;font-size:18.03px;line-height:21px;color:#222;-webkit-text-stroke:0.2px #222;letter-spacing:0.183px;">48</div><div class="a" style="left:14px;top:156px;width:798px;height:2px;background:#d3dae6"></div><div class="a" style="left:19.00px;top:164.25px;font-size:18.03px;line-height:21px;color:#222;-webkit-text-stroke:0.2px #222;letter-spacing:0.184px;">45.117.160.21</div><div class="a" style="left:611.00px;top:164.25px;font-size:18.03px;line-height:21px;color:#222;-webkit-text-stroke:0.2px #222;letter-spacing:0.183px;">46</div><div class="a" style="left:14px;top:190px;width:798px;height:2px;background:#d3dae6"></div><div class="a" style="left:19.00px;top:198.25px;font-size:18.03px;line-height:21px;color:#222;-webkit-text-stroke:0.2px #222;letter-spacing:0.073px;">71.6.146.185</div><div class="a" style="left:611.00px;top:198.25px;font-size:18.03px;line-height:21px;color:#222;-webkit-text-stroke:0.2px #222;letter-spacing:0.183px;">30</div><div class="a" style="left:14px;top:224px;width:798px;height:2px;background:#d3dae6"></div><div class="a" style="left:19.00px;top:232.25px;font-size:18.03px;line-height:21px;color:#222;-webkit-text-stroke:0.2px #222;letter-spacing:0.081px;">192.169.188.8</div><div class="a" style="left:611.00px;top:232.25px;font-size:18.03px;line-height:21px;color:#222;-webkit-text-stroke:0.2px #222;letter-spacing:0.183px;">24</div><div class="a" style="left:14px;top:258px;width:798px;height:2px;background:#d3dae6"></div></div>
<div class="p" style="left:1074px;top:734px;width:1426px;height:300px"><div class="a" style="left:6.00px;top:8.25px;font-size:18.03px;line-height:21px;color:#69707d;-webkit-text-stroke:0.2px #69707d;letter-spacing:0.060px;">Top WAF Rules Triggered</div><div class="a" style="left:20.00px;top:62.25px;font-size:18.03px;line-height:21px;color:#1d1d1d;font-weight:bold;letter-spacing:0.135px;">WAFRuleID.keyword: Descending</div><svg class="a" style="left:317px;top:64px;" width="11" height="14" viewBox="0 0 11 14"><path d="M5.5 0L11 6H0Z M0 8H11L5.5 14Z" fill="#c9d0db"/></svg><div class="a" style="left:344.00px;top:62.25px;font-size:18.03px;line-height:21px;color:#1d1d1d;font-weight:bold;letter-spacing:0.139px;">WAFRuleMessage.keyword: Descending</div><svg class="a" style="left:700px;top:64px;" width="11" height="14" viewBox="0 0 11 14"><path d="M5.5 0L11 6H0Z M0 8H11L5.5 14Z" fill="#c9d0db"/></svg><div class="a" style="left:1326.00px;top:62.25px;font-size:18.03px;line-height:21px;color:#1d1d1d;font-weight:bold;letter-spacing:0.141px;">Count</div><svg class="a" style="left:1384px;top:64px;" width="11" height="14" viewBox="0 0 11 14"><path d="M5.5 0L11 6H0Z M0 8H11L5.5 14Z" fill="#c9d0db"/></svg><div class="a" style="left:16px;top:88px;width:1390px;height:2px;background:#d3dae6"></div><div class="a" style="left:20.00px;top:96.25px;font-size:18.03px;line-height:21px;color:#222;-webkit-text-stroke:0.2px #222;letter-spacing:0.183px;">100016</div><div class="a" style="left:344.00px;top:96.25px;font-size:18.03px;line-height:21px;color:#222;-webkit-text-stroke:0.2px #222;letter-spacing:0.330px;">Block requests to version control systems</div><div class="a" style="left:1326.00px;top:96.25px;font-size:18.03px;line-height:21px;color:#222;-webkit-text-stroke:0.2px #222;letter-spacing:0.183px;">372</div><div class="a" style="left:16px;top:122px;width:1390px;height:2px;background:#d3dae6"></div><div class="a" style="left:20.00px;top:130.25px;font-size:18.03px;line-height:21px;color:#222;-webkit-text-stroke:0.2px #222;letter-spacing:0.183px;">100001</div><div class="a" style="left:344.00px;top:130.25px;font-size:18.03px;line-height:21px;color:#222;-webkit-text-stroke:0.2px #222;letter-spacing:0.189px;">Empty User-Agent</div><div class="a" style="left:1326.00px;top:130.25px;font-size:18.03px;line-height:21px;color:#222;-webkit-text-stroke:0.2px #222;letter-spacing:0.183px;">156</div><div class="a" style="left:16px;top:156px;width:1390px;height:2px;background:#d3dae6"></div><div class="a" style="left:20.00px;top:164.25px;font-size:18.03px;line-height:21px;color:#222;-webkit-text-stroke:0.2px #222;letter-spacing:0.406px;">981176</div><div class="a" style="left:344.00px;top:164.25px;font-size:18.03px;line-height:21px;color:#222;-webkit-text-stroke:0.2px #222;letter-spacing:-0.026px;">Inbound Anomaly Score Exceeded (Total Score: 25, SQLi=11, XSS=5): Last Matched Message: End XSS pattern check</div><div class="a" style="left:1326.00px;top:164.25px;font-size:18.03px;line-height:21px;color:#222;-webkit-text-stroke:0.2px #222;letter-spacing:0.183px;">88</div><div class="a" style="left:16px;top:190px;width:1390px;height:2px;background:#d3dae6"></div><div class="a" style="left:20.00px;top:198.25px;font-size:18.03px;line-height:21px;color:#222;-webkit-text-stroke:0.2px #222;letter-spacing:0.406px;">981176</div><div class="a" style="left:344.00px;top:198.25px;font-size:18.03px;line-height:21px;color:#222;-webkit-text-stroke:0.2px #222;letter-spacing:-0.038px;">Inbound Anomaly Score Exceeded (Total Score: 30, SQLi=12, XSS=5): Last Matched Message: End XSS pattern check</div><div class="a" style="left:1326.00px;top:198.25px;font-size:18.03px;line-height:21px;color:#222;-webkit-text-stroke:0.2px #222;letter-spacing:0.183px;">1</div><div class="a" style="left:16px;top:224px;width:1390px;height:2px;background:#d3dae6"></div><div class="a" style="left:20.00px;top:232.25px;font-size:18.03px;line-height:21px;color:#222;-webkit-text-stroke:0.2px #222;letter-spacing:-0.172px;">WP0026</div><div class="a" style="left:344.00px;top:232.25px;font-size:18.03px;line-height:21px;color:#222;-webkit-text-stroke:0.2px #222;letter-spacing:0.370px;">wp-config.php LFI protection</div><div class="a" style="left:1326.00px;top:232.25px;font-size:18.03px;line-height:21px;color:#222;-webkit-text-stroke:0.2px #222;letter-spacing:0.183px;">67</div><div class="a" style="left:16px;top:258px;width:1390px;height:2px;background:#d3dae6"></div><div class="a" style="left:20.00px;top:266.25px;font-size:18.03px;line-height:21px;color:#222;-webkit-text-stroke:0.2px #222;letter-spacing:0.053px;">100043A</div><div class="a" style="left:344.00px;top:266.25px;font-size:18.03px;line-height:21px;color:#222;-webkit-text-stroke:0.2px #222;letter-spacing:0.054px;">False IE6 detection [Type B]</div><div class="a" style="left:1326.00px;top:266.25px;font-size:18.03px;line-height:21px;color:#222;-webkit-text-stroke:0.2px #222;letter-spacing:0.183px;">20</div></div>
<div class="p" style="left:234px;top:1042px;width:2264px;height:384px"><div class="a" style="left:6.00px;top:8.25px;font-size:18.03px;line-height:21px;color:#69707d;-webkit-text-stroke:0.2px #69707d;letter-spacing:0.082px;">WAF: Top User Agents</div><div class="a" style="left:19.00px;top:62.25px;font-size:18.03px;line-height:21px;color:#1d1d1d;font-weight:bold;letter-spacing:0.135px;">WAFRuleID.keyword: Descending</div><svg class="a" style="left:316px;top:64px;" width="11" height="14" viewBox="0 0 11 14"><path d="M5.5 0L11 6H0Z M0 8H11L5.5 14Z" fill="#c9d0db"/></svg><div class="a" style="left:521.00px;top:62.25px;font-size:18.03px;line-height:21px;color:#1d1d1d;font-weight:bold;letter-spacing:0.131px;">ClientRequestUserAgent.keyword: Descending</div><svg class="a" style="left:935px;top:64px;" width="11" height="14" viewBox="0 0 11 14"><path d="M5.5 0L11 6H0Z M0 8H11L5.5 14Z" fill="#c9d0db"/></svg><div class="a" style="left:2121.00px;top:62.25px;font-size:18.03px;line-height:21px;color:#1d1d1d;font-weight:bold;letter-spacing:0.141px;">Count</div><svg class="a" style="left:2179px;top:64px;" width="11" height="14" viewBox="0 0 11 14"><path d="M5.5 0L11 6H0Z M0 8H11L5.5 14Z" fill="#c9d0db"/></svg><div class="a" style="left:14px;top:88px;width:2230px;height:2px;background:#d3dae6"></div><div class="a" style="left:19.00px;top:96.25px;font-size:18.03px;line-height:21px;color:#222;-webkit-text-stroke:0.2px #222;letter-spacing:0.183px;">100016</div><div class="a" style="left:521.00px;top:96.25px;font-size:18.03px;line-height:21px;color:#222;-webkit-text-stroke:0.2px #222;letter-spacing:0.124px;">Mozilla/5.0 (Windows NT 10.0; Win64; x64) AppleWebKit/537.36 (KHTML, like Gecko) Chrome/71.0.3578.98 Safari/537.36</div><div class="a" style="left:2121.00px;top:96.25px;font-size:18.03px;line-height:21px;color:#222;-webkit-text-stroke:0.2px #222;letter-spacing:0.183px;">372</div><div class="a" style="left:14px;top:122px;width:2230px;height:2px;background:#d3dae6"></div><div class="a" style="left:19.00px;top:130.25px;font-size:18.03px;line-height:21px;color:#222;-webkit-text-stroke:0.2px #222;letter-spacing:0.183px;">100001</div><div class="a" style="left:521.00px;top:130.25px;font-size:18.03px;line-height:21px;color:#222;-webkit-text-stroke:0.2px #222;"></div><div class="a" style="left:2121.00px;top:130.25px;font-size:18.03px;line-height:21px;color:#222;-webkit-text-stroke:0.2px #222;letter-spacing:0.183px;">156</div><div class="a" style="left:14px;top:156px;width:2230px;height:2px;background:#d3dae6"></div><div class="a" style="left:19.00px;top:164.25px;font-size:18.03px;line-height:21px;color:#222;-webkit-text-stroke:0.2px #222;letter-spacing:0.406px;">981176</div><div class="a" style="left:521.00px;top:164.25px;font-size:18.03px;line-height:21px;color:#222;-webkit-text-stroke:0.2px #222;letter-spacing:0.122px;">Mozilla/5.0 (Windows NT 6.1; WOW64) AppleWebKit/537.36 (KHTML, like Gecko) Chrome/42.0.2311.90 Safari/537.36</div><div class="a" style="left:2121.00px;top:164.25px;font-size:18.03px;line-height:21px;color:#222;-webkit-text-stroke:0.2px #222;letter-spacing:0.183px;">80</div><div class="a" style="left:14px;top:190px;width:2230px;height:2px;background:#d3dae6"></div><div class="a" style="left:19.00px;top:198.25px;font-size:18.03px;line-height:21px;color:#222;-webkit-text-stroke:0.2px #222;letter-spacing:0.406px;">981176</div><div class="a" style="left:521.00px;top:198.25px;font-size:18.03px;line-height:21px;color:#222;-webkit-text-stroke:0.2px #222;letter-spacing:0.125px;">Mozilla/5.0 (Windows NT 10.0; Win64; x64) AppleWebKit/537.36 (KHTML, like Gecko) Chrome/63.0.3239.132 Safari/537.36</div><div class="a" style="left:2121.00px;top:198.25px;font-size:18.03px;line-height:21px;color:#222;-webkit-text-stroke:0.2px #222;letter-spacing:0.183px;">8</div><div class="a" style="left:14px;top:224px;width:2230px;height:2px;background:#d3dae6"></div><div class="a" style="left:19.00px;top:232.25px;font-size:18.03px;line-height:21px;color:#222;-webkit-text-stroke:0.2px #222;letter-spacing:0.406px;">981176</div><div class="a" style="left:521.00px;top:232.25px;font-size:18.03px;line-height:21px;color:#222;-webkit-text-stroke:0.2px #222;letter-spacing:0.154px;">Mozilla/5.0 (Windows NT 10.0; Win64; x64; rv:48.0) Gecko/20100101 Firefox/48.0</div><div class="a" style="left:2121.00px;top:232.25px;font-size:18.03px;line-height:21px;color:#222;-webkit-text-stroke:0.2px #222;letter-spacing:0.183px;">1</div><div class="a" style="left:14px;top:258px;width:2230px;height:2px;background:#d3dae6"></div><div class="a" style="left:19.00px;top:266.25px;font-size:18.03px;line-height:21px;color:#222;-webkit-text-stroke:0.2px #222;letter-spacing:-0.172px;">WP0026</div><div class="a" style="left:521.00px;top:266.25px;font-size:18.03px;line-height:21px;color:#222;-webkit-text-stroke:0.2px #222;letter-spacing:0.153px;">Mozilla/5.0 (Windows NT 6.1; Win64; x64; rv:64.0) Gecko/20100101 Firefox/64.0</div><div class="a" style="left:2121.00px;top:266.25px;font-size:18.03px;line-height:21px;color:#222;-webkit-text-stroke:0.2px #222;letter-spacing:0.183px;">67</div><div class="a" style="left:14px;top:292px;width:2230px;height:2px;background:#d3dae6"></div><div class="a" style="left:19.00px;top:300.25px;font-size:18.03px;line-height:21px;color:#222;-webkit-text-stroke:0.2px #222;letter-spacing:0.053px;">100043A</div><div class="a" style="left:521.00px;top:300.25px;font-size:18.03px;line-height:21px;color:#222;-webkit-text-stroke:0.2px #222;letter-spacing:0.030px;">Mozilla/4.0 (compatible; MSIE 6.0; Windows NT 5.1; SV1)</div><div class="a" style="left:2121.00px;top:300.25px;font-size:18.03px;line-height:21px;color:#222;-webkit-text-stroke:0.2px #222;letter-spacing:0.183px;">10</div><div class="a" style="left:14px;top:326px;width:2230px;height:2px;background:#d3dae6"></div><div class="a" style="left:19.00px;top:334.25px;font-size:18.03px;line-height:21px;color:#222;-webkit-text-stroke:0.2px #222;letter-spacing:0.053px;">100043A</div><div class="a" style="left:521.00px;top:334.25px;font-size:18.03px;line-height:21px;color:#222;-webkit-text-stroke:0.2px #222;letter-spacing:0.116px;">Mozilla/4.0 (compatible; MSIE 6.0; Windows NT 5.1; en) Opera 8.50</div><div class="a" style="left:2121.00px;top:334.25px;font-size:18.03px;line-height:21px;color:#222;-webkit-text-stroke:0.2px #222;letter-spacing:0.183px;">10</div><div class="a" style="left:14px;top:360px;width:2230px;height:2px;background:#d3dae6"></div></div>
</body></html>
